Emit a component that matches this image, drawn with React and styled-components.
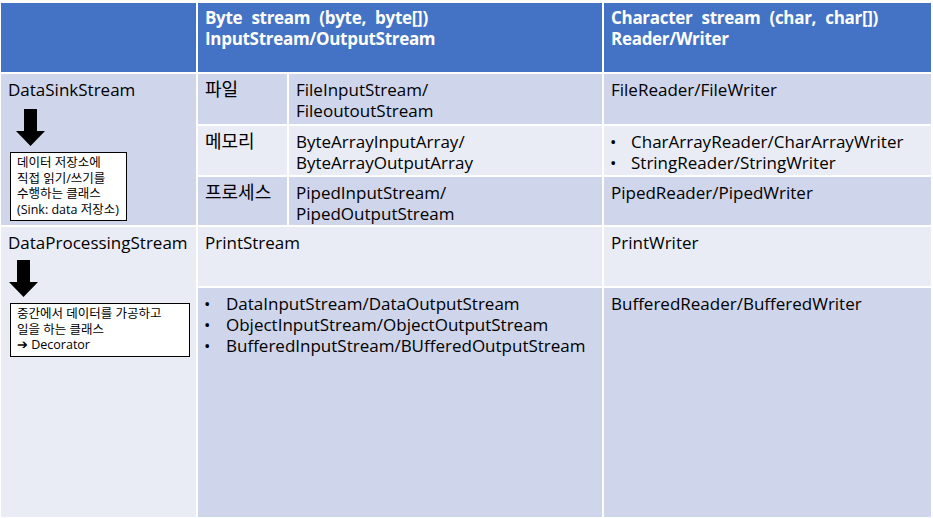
import React from 'react';
import styled, { createGlobalStyle } from 'styled-components';

const GlobalStyle = createGlobalStyle`
	html, body {
		margin: 0;
		padding: 0;
		background: #ffffff;
	}
	body {
		font-family: 'Open Sans', 'Noto Sans CJK KR', sans-serif;
	}
`;

const COLORS = {
	header: '#4472c4',
	dark: '#cfd5ea',
	light: '#e9ebf5',
};

const Page = styled.div`
	width: 933px;
	height: 518px;
	padding: 3px 0 0 1px;
	box-sizing: border-box;
	overflow: hidden;
`;

const Table = styled.div`
	display: grid;
	grid-template-columns: 195px 89px 313px 327px;
	grid-template-rows: 69px 50px 49px 48px 59px 229px;
	gap: 2px;
	width: 930px;
	background: #ffffff;
`;

const Cell = styled.div`
	background: ${props => props.bg};
	grid-column: ${props => props.col || 'auto'};
	grid-row: ${props => props.row || 'auto'};
	padding: 5px 7px;
	font-size: 17px;
	line-height: 21px;
	color: #000000;
`;

const HeaderCell = styled(Cell)`
	background: ${COLORS.header};
	color: #ffffff;
	font-weight: 700;
	letter-spacing: -0.3px;
	word-spacing: 5px;
	padding-top: 4px;
`;

const LabelCell = styled(Cell)`
	font-size: 18px;
	padding-top: 4px;
	line-height: 22px;
`;

const Line = styled.div`
	white-space: nowrap;
`;

const BulletList = styled.ul`
	margin: 0;
	padding: 0;
	list-style: none;
`;

const Bullet = styled.li`
	display: flex;
	white-space: nowrap;
	&::before {
		content: '•';
		width: ${props => props.indent || 22}px;
		margin-left: -1px;
		flex: none;
	}
`;

const SideCell = styled(Cell)`
	display: flex;
	flex-direction: column;
	align-items: flex-start;
`;

const ArrowWrap = styled.div`
	margin-top: ${props => props.top}px;
	margin-left: ${props => props.left}px;
	line-height: 0;
`;

const NoteBox = styled.div`
	margin-top: 6px;
	margin-left: 2px;
	width: ${props => props.w}px;
	box-sizing: border-box;
	background: #ffffff;
	border: 1px solid #000000;
	padding: 2px 6px 3px;
	font-size: 12.5px;
	line-height: 15.5px;
	white-space: nowrap;
`;

const DownArrow = () => (
	<svg width="29" height="37" viewBox="0 0 29 37">
		<polygon points="8,0 21,0 21,22 29,22 14.5,37 0,22 8,22" fill="#000000" />
	</svg>
);

const App = () => (
	<>
		<GlobalStyle />
		<Page>
			<Table>
				<HeaderCell col="1" row="1" />
				<HeaderCell col="2 / 4" row="1">
					<Line>Byte stream (byte, byte[])</Line>
					<Line>InputStream/OutputStream</Line>
				</HeaderCell>
				<HeaderCell col="4" row="1">
					<Line>Character stream (char, char[])</Line>
					<Line>Reader/Writer</Line>
				</HeaderCell>

				<SideCell bg={COLORS.dark} col="1" row="2 / 5">
					<Line>DataSinkStream</Line>
					<ArrowWrap top={9} left={8}>
						<DownArrow />
					</ArrowWrap>
					<NoteBox w={117}>
						<Line>데이터 저장소에</Line>
						<Line>직접 읽기/쓰기를</Line>
						<Line>수행하는 클래스</Line>
						<Line>(Sink: data 저장소)</Line>
					</NoteBox>
				</SideCell>

				<LabelCell bg={COLORS.dark} col="2" row="2">파일</LabelCell>
				<Cell bg={COLORS.dark} col="3" row="2">
					<Line>FileInputStream/</Line>
					<Line>FileoutoutStream</Line>
				</Cell>
				<Cell bg={COLORS.dark} col="4" row="2">FileReader/FileWriter</Cell>

				<LabelCell bg={COLORS.light} col="2" row="3">메모리</LabelCell>
				<Cell bg={COLORS.light} col="3" row="3">
					<Line>ByteArrayInputArray/</Line>
					<Line>ByteArrayOutputArray</Line>
				</Cell>
				<Cell bg={COLORS.light} col="4" row="3">
					<BulletList>
						<Bullet indent={21}>CharArrayReader/CharArrayWriter</Bullet>
						<Bullet indent={21}>StringReader/StringWriter</Bullet>
					</BulletList>
				</Cell>

				<LabelCell bg={COLORS.dark} col="2" row="4">프로세스</LabelCell>
				<Cell bg={COLORS.dark} col="3" row="4">
					<Line>PipedInputStream/</Line>
					<Line>PipedOutputStream</Line>
				</Cell>
				<Cell bg={COLORS.dark} col="4" row="4">PipedReader/PipedWriter</Cell>

				<SideCell bg={COLORS.light} col="1" row="5 / 7">
					<Line>DataProcessingStream</Line>
					<ArrowWrap top={7} left={1}>
						<DownArrow />
					</ArrowWrap>
					<NoteBox w={180}>
						<Line>중간에서 데이터를 가공하고</Line>
						<Line>일을 하는 클래스</Line>
						<Line>➔ Decorator</Line>
					</NoteBox>
				</SideCell>

				<Cell bg={COLORS.light} col="2 / 4" row="5">PrintStream</Cell>
				<Cell bg={COLORS.light} col="4" row="5">PrintWriter</Cell>

				<Cell bg={COLORS.dark} col="2 / 4" row="6">
					<BulletList>
						<Bullet>DataInputStream/DataOutputStream</Bullet>
						<Bullet>ObjectInputStream/ObjectOutputStream</Bullet>
						<Bullet>BufferedInputStream/BUfferedOutputStream</Bullet>
					</BulletList>
				</Cell>
				<Cell bg={COLORS.dark} col="4" row="6">BufferedReader/BufferedWriter</Cell>
			</Table>
		</Page>
	</>
);

export default App;
